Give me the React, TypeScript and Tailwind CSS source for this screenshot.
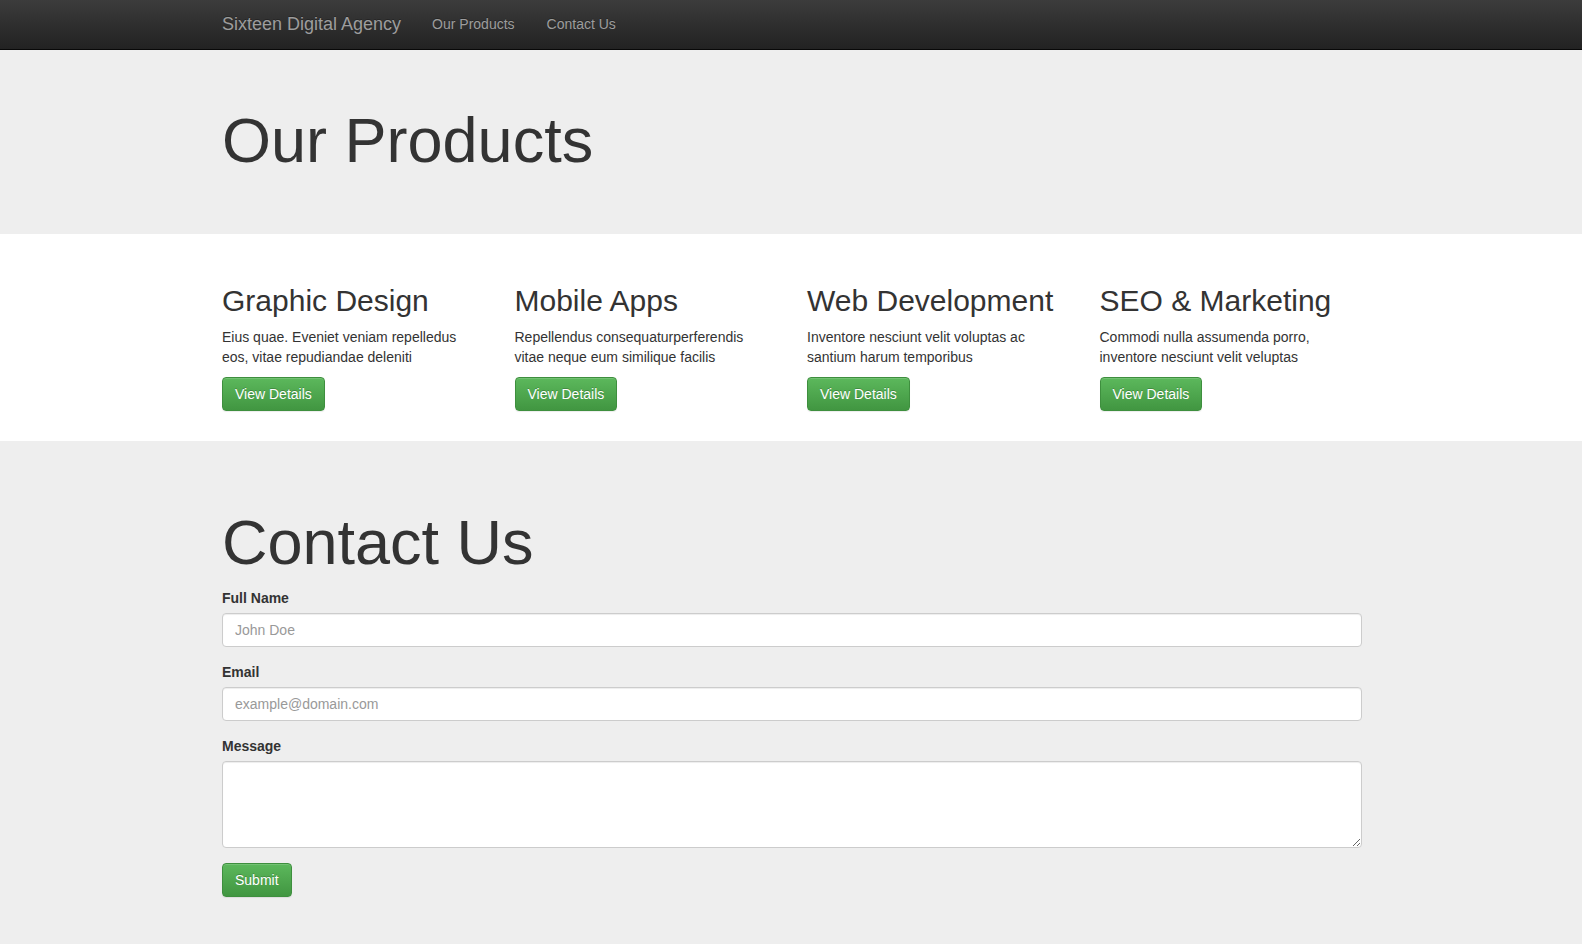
import React from "react";

const products = [
  {
    title: "Graphic Design",
    text: "Eius quae. Eveniet veniam repelledus eos, vitae repudiandae deleniti",
  },
  {
    title: "Mobile Apps",
    text: "Repellendus consequaturperferendis vitae neque eum similique facilis",
  },
  {
    title: "Web Development",
    text: "Inventore nesciunt velit voluptas ac santium harum temporibus",
  },
  {
    title: "SEO & Marketing",
    text: "Commodi nulla assumenda porro, inventore nesciunt velit veluptas",
  },
];

const btnSuccess =
  "inline-block h-[34px] px-[12px] rounded-[4px] border border-[#3e8f3e] bg-gradient-to-b from-[#5cb85c] to-[#419641] text-white text-[14px] leading-[20px] [text-shadow:0_-1px_0_rgba(0,0,0,0.2)] shadow-[inset_0_1px_0_rgba(255,255,255,0.15),0_1px_1px_rgba(0,0,0,0.075)]";

const inputCls =
  "block w-full h-[34px] px-[12px] rounded-[4px] border border-[#ccc] bg-white text-[14px] text-[#555] placeholder:text-[#999] shadow-[inset_0_1px_1px_rgba(0,0,0,0.075)] outline-none";

export default function App() {
  return (
    <div className="min-h-screen bg-[#eee] text-[#333] font-['Liberation_Sans',Arial,sans-serif] text-[14px] leading-[20px]">
      {/* Navbar */}
      <nav className="h-[50px] bg-gradient-to-b from-[#3c3c3c] to-[#222] border-b border-[#080808]">
        <div className="w-[1142px] mx-auto pl-[2px] pb-[2px] flex items-center h-full">
          <a className="text-[18px] leading-[20px] text-[#9d9d9d] pr-[15px] [text-shadow:0_-1px_0_rgba(0,0,0,0.25)]">
            Sixteen Digital Agency
          </a>
          <a className="px-[16px] text-[#9d9d9d] [text-shadow:0_-1px_0_rgba(0,0,0,0.25)]">
            Our Products
          </a>
          <a className="px-[16px] text-[#9d9d9d] [text-shadow:0_-1px_0_rgba(0,0,0,0.25)]">
            Contact Us
          </a>
        </div>
      </nav>

      {/* Jumbotron */}
      <div className="h-[184px] bg-[#eee] pt-[56px]">
        <div className="w-[1142px] mx-auto pl-[2px]">
          <h1 className="text-[63px] leading-[69px] font-normal">Our Products</h1>
        </div>
      </div>

      {/* Products */}
      <div className="bg-white pt-[50px] pb-[30px]">
        <div className="w-[1142px] mx-auto pl-[2px] grid grid-cols-4 gap-[30px]">
          {products.map((p) => (
            <div key={p.title}>
              <h2 className="text-[30px] leading-[33px] font-normal mb-[10px]">
                {p.title}
              </h2>
              <p className="mb-[10px] pr-[4px]">{p.text}</p>
              <button className={btnSuccess}>View Details</button>
            </div>
          ))}
        </div>
      </div>

      {/* Contact */}
      <div className="bg-[#eee] pt-[67px] pb-[47px]">
        <div className="w-[1142px] mx-auto pl-[2px]">
          <h1 className="text-[63px] leading-[69px] font-normal mb-[11px]">Contact Us</h1>
          <form onSubmit={(e) => e.preventDefault()}>
            <div className="mb-[15px]">
              <label className="block font-bold mb-[5px]">Full Name</label>
              <input className={inputCls} placeholder="John Doe" />
            </div>
            <div className="mb-[15px]">
              <label className="block font-bold mb-[5px]">Email</label>
              <input className={inputCls} placeholder="example@domain.com" />
            </div>
            <div className="mb-[15px]">
              <label className="block font-bold mb-[5px]">Message</label>
              <textarea className={inputCls + " h-[87px] py-[6px]"} />
            </div>
            <button type="submit" className={btnSuccess}>
              Submit
            </button>
          </form>
        </div>
      </div>
    </div>
  );
}
